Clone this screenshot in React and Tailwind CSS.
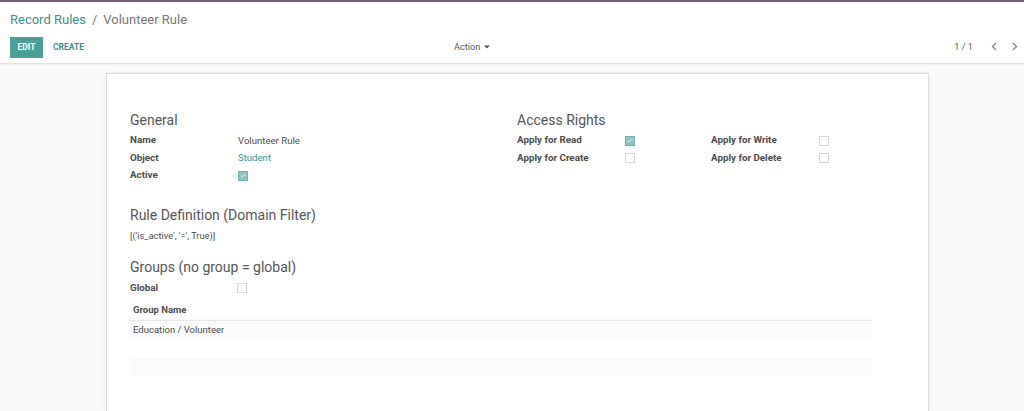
import React from "react";

function Check({ checked, className = "" }) {
  return checked ? (
    <span className={"inline-flex items-center justify-center w-[10px] h-[10px] bg-[#8fc5c0] border border-[#6fb3ad] " + className}>
      <svg width="6" height="5" viewBox="0 0 6 5"><path d="M0.8 2.6 L2.3 3.9 L5.2 1" stroke="#e8f4f3" strokeWidth="1" fill="none" /></svg>
    </span>
  ) : (
    <span className={"inline-block w-[10px] h-[10px] bg-white border border-[#d6d6d6] " + className} />
  );
}

function Row({ label, children, labelW = "w-[108px]" }) {
  return (
    <div className="flex items-center h-[17.5px]">
      <div className={labelW + " text-[9.8px] font-bold text-[#4c4c4c]"}>{label}</div>
      <div className="flex items-center text-[9.6px] text-[#4c4c4c]">{children}</div>
    </div>
  );
}

export default function App() {
  return (
    <div className="w-[1024px] h-[411px] overflow-hidden bg-[#f9f9f9] flex flex-col" style={{ fontFamily: "Roboto, 'Liberation Sans', sans-serif" }}>
      <div className="h-[2px] bg-[#7b5d7a]" />
      <div className="bg-white border-b border-[#e2e2e2] shadow-[0_1px_2px_rgba(0,0,0,0.05)] h-[62px] pl-[10px] pr-[6px] flex flex-col">
        <div className="pt-[2px] h-[33px] flex items-center text-[13px]">
          <span className="text-[#3d8f89]">Record Rules</span>
          <span className="text-[#777] mx-[6px]">/</span>
          <span className="text-[#777]">Volunteer Rule</span>
        </div>
        <div className="flex items-center h-[22px] mt-[1px]">
          <div className="w-[33px] h-[21px] bg-[#4a9f97] text-white text-[8.5px] font-bold flex items-center justify-center">EDIT</div>
          <div className="ml-[10px] text-[#3d8f89] text-[8.5px] font-bold">CREATE</div>
          <div className="ml-[370px] flex items-center text-[9.2px] text-[#555]">
            Action
            <svg className="ml-[4px]" width="6" height="4" viewBox="0 0 6 4"><path d="M0 0.5 H6 L3 3.5 Z" fill="#555" /></svg>
          </div>
          <div className="ml-auto flex items-center text-[9.2px] text-[#555]">
            <span>1 / 1</span>
            <svg className="ml-[18px]" width="6" height="9" viewBox="0 0 6 9"><path d="M5 1 L1.5 4.5 L5 8" stroke="#888" strokeWidth="1.4" fill="none" /></svg>
            <svg className="ml-[15px]" width="6" height="9" viewBox="0 0 6 9"><path d="M1 1 L4.5 4.5 L1 8" stroke="#888" strokeWidth="1.4" fill="none" /></svg>
          </div>
        </div>
      </div>
      <div className="flex-1 pt-[9px]">
        <div className="ml-[106px] w-[823px] h-full bg-white border border-[#d8d8d8] border-b-0 shadow-[0_2px_6px_rgba(0,0,0,0.06)] pl-[23px] pt-[37px]">
          <div className="flex">
            <div className="w-[387px]">
              <div className="text-[14px] text-[#555] h-[19px] leading-[19px] mb-[2px]">General</div>
              <Row label="Name">Volunteer Rule</Row>
              <Row label="Object"><span className="text-[#3d8f89]">Student</span></Row>
              <Row label="Active"><Check checked /></Row>
            </div>
            <div className="flex-1">
              <div className="text-[14px] text-[#555] h-[19px] leading-[19px] mb-[2px]">Access Rights</div>
              <div className="flex">
                <div className="w-[194px]">
                  <Row label="Apply for Read"><Check checked /></Row>
                  <Row label="Apply for Create"><Check /></Row>
                </div>
                <div>
                  <Row label="Apply for Write"><Check /></Row>
                  <Row label="Apply for Delete"><Check /></Row>
                </div>
              </div>
            </div>
          </div>
          <div className="mt-[21px] text-[14px] text-[#555] h-[19px] leading-[19px]">Rule Definition (Domain Filter)</div>
          <div className="mt-[4px] text-[9.3px] text-[#4c4c4c]">[('is_active', '=', True)]</div>
          <div className="mt-[16px] text-[14px] text-[#555] h-[19px] leading-[19px]">Groups (no group = global)</div>
          <div className="mt-[2px]">
            <Row label="Global"><Check className="-ml-[1px]" /></Row>
          </div>
          <div className="w-[742px] mt-[4px]">
            <div className="h-[19px] flex items-center px-[3px] text-[9.5px] font-bold text-[#4c4c4c]">Group Name</div>
            <div className="h-[19px] flex items-center px-[3px] text-[9.5px] text-[#4c4c4c] bg-[#fafafa] border-t border-[#e6e6e6] shadow-[0_-1px_2px_rgba(0,0,0,0.04)]">Education / Volunteer</div>
            <div className="h-[19px]" />
            <div className="h-[19px] bg-[#fafafa]" />
          </div>
        </div>
      </div>
    </div>
  );
}
